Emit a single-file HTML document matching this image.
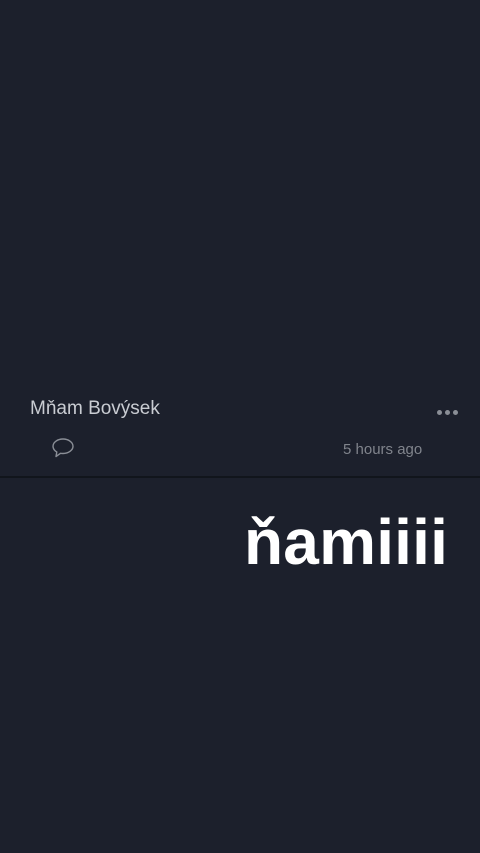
<!DOCTYPE html>
<html><head><meta charset="utf-8"><style>
html,body{margin:0;padding:0;}
body{width:480px;height:853px;background:#1c202c;position:relative;overflow:hidden;font-family:"Liberation Sans",sans-serif;}
.name{position:absolute;left:30px;top:398px;font-size:19px;color:#c9ccd2;}
.dots{position:absolute;left:437px;top:410px;line-height:0;}
.dots span{display:inline-block;width:5px;height:5px;border-radius:50%;background:#8a8e96;margin-right:3px;}
.time{position:absolute;left:343px;top:441px;font-size:15px;color:#80848c;}
.line{position:absolute;left:0;top:476px;width:480px;height:2px;background:#11151c;}
.big{position:absolute;left:244px;top:504px;font-size:64px;font-weight:bold;color:#fff;line-height:76px;letter-spacing:0.2px;}
svg{position:absolute;left:51px;top:437px;}
</style></head><body>
<div class="name">Mňam Bovýsek</div>
<div class="dots"><span></span><span></span><span></span></div>
<svg width="24" height="22" viewBox="0 0 24 22"><path d="M12 2C6.5 2 2 5.3 2 9.3c0 2.4 1.5 4.4 3.8 5.7L5 19.5l4.5-3.2c.8.2 1.6.2 2.5.2 5.5 0 10-3.3 10-7.2S17.5 2 12 2z" fill="none" stroke="#8a8e96" stroke-width="1.4" stroke-linejoin="round"/></svg>
<div class="time">5 hours ago</div>
<div class="line"></div>
<div class="big">ňamiiii</div>
</body></html>
